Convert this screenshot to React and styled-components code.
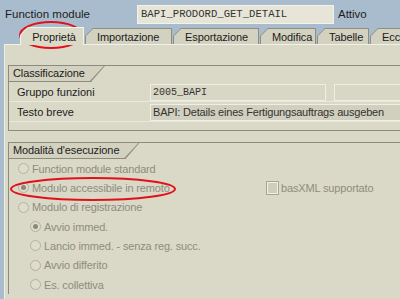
import React from 'react'
import styled, {createGlobalStyle} from 'styled-components'

const Global = createGlobalStyle`
  body {
    margin: 0;
    background: #a9bccd;
    font-family: "Liberation Sans", Arial, sans-serif;
    font-size: 11px;
  }
`

const tabs = [
  {label: 'Proprietà', width: 64, active: true},
  {label: 'Importazione', width: 87},
  {label: 'Esportazione', width: 86},
  {label: 'Modifica', width: 56},
  {label: 'Tabelle', width: 52},
  {label: 'Eccezioni', width: 60},
]

const modes = [
  {label: 'Function module standard'},
  {label: 'Modulo accessibile in remoto', checked: true, extra: 'basXML supportato'},
  {label: 'Modulo di registrazione'},
  {label: 'Avvio immed.', checked: true, sub: true},
  {label: 'Lancio immed. - senza reg. succ.', sub: true},
  {label: 'Avvio differito', sub: true},
  {label: 'Es. collettiva', sub: true},
]

export default function App() {
  return (
    <Screen>
      <Global />
      <TopBar>
        <TopLabel>Function module</TopLabel>
        <NameBox>BAPI_PRODORD_GET_DETAIL</NameBox>
        <Status>Attivo</Status>
      </TopBar>
      <TabStrip>
        {tabs.map(tab => (
          <Tab key={tab.label} width={tab.width} active={tab.active}>
            <TabFace active={tab.active}>{tab.label}</TabFace>
          </Tab>
        ))}
      </TabStrip>
      <Panel>
        <Group>
          <GroupHead>
            <GroupTitle>Classificazione</GroupTitle>
          </GroupHead>
          <FieldRow>
            <FieldLabel>Gruppo funzioni</FieldLabel>
            <Field mono width={172}>2005_BAPI</Field>
            <Field width={80} />
          </FieldRow>
          <FieldRow>
            <FieldLabel>Testo breve</FieldLabel>
            <Field grow dark>BAPI: Details eines Fertigungsauftrags ausgeben</Field>
          </FieldRow>
          <GroupFoot />
        </Group>
        <Group>
          <GroupHead>
            <GroupTitle>Modalità d'esecuzione</GroupTitle>
          </GroupHead>
          <Options>
            {modes.map(mode => (
              <Option key={mode.label} sub={mode.sub}>
                <OptionMain sub={mode.sub}>
                  <Radio checked={mode.checked} />
                  {mode.label}
                </OptionMain>
                {mode.extra && (
                  <CheckWrap>
                    <CheckBox />
                    {mode.extra}
                  </CheckWrap>
                )}
              </Option>
            ))}
          </Options>
        </Group>
      </Panel>
      <Marks width="400" height="299">
        <ellipse cx="51" cy="35" rx="31" ry="13" />
        <ellipse cx="93" cy="189" rx="82" ry="11" />
      </Marks>
    </Screen>
  )
}

const Screen = styled.div`
  position: relative;
  width: 400px;
  height: 299px;
  overflow: hidden;
  display: flex;
  flex-direction: column;
  background: #a9bccd;
`

const TopBar = styled.div`
  flex: none;
  height: 28px;
  display: flex;
  align-items: center;
  padding: 0 0 0 5px;
  color: #1c1c1c;
  font-size: 11.5px;
`

const TopLabel = styled.div`
  width: 132px;
`

const NameBox = styled.div`
  width: 192px;
  height: 17px;
  padding-left: 3px;
  background: #e7e5d7;
  border: 1px solid #f3f2ea;
  font-family: "Liberation Mono", "Courier New", monospace;
  font-size: 10.6px;
  line-height: 17px;
  color: #333;
`

const Status = styled.div`
  margin-left: 4px;
`

const TabStrip = styled.div`
  flex: none;
  height: 16px;
  display: flex;
  align-items: flex-end;
  gap: 1px;
  padding-left: 20px;
`

const Tab = styled.div`
  flex: none;
  width: ${p => p.width}px;
  height: ${p => (p.active ? 18 : 16)}px;
  margin-bottom: ${p => (p.active ? -1 : 0)}px;
  background: ${p => (p.active ? '#f4f3ea' : '#8f8e80')};
  clip-path: polygon(8px 0, 100% 0, 100% 100%, 0 100%, 0 8px);
  position: relative;
  z-index: ${p => (p.active ? 2 : 1)};
`

const TabFace = styled.div`
  position: absolute;
  left: 1px;
  top: 1px;
  right: 1px;
  bottom: 0;
  background: ${p => (p.active ? '#dbd9c7' : '#d3d1bf')};
  clip-path: polygon(7px 0, 100% 0, 100% 100%, 0 100%, 0 7px);
  display: flex;
  align-items: center;
  justify-content: ${p => (p.active ? 'center' : 'flex-start')};
  padding-left: ${p => (p.active ? 4 : 11)}px;
  font-size: 11px;
  letter-spacing: -0.1px;
  color: #1c1c1c;
  white-space: nowrap;
  overflow: hidden;
`

const Panel = styled.div`
  flex: 1;
  min-height: 0;
  overflow: hidden;
  margin-left: 4px;
  background: #dad8c6;
  border-top: 1px solid #f2f1e8;
  border-left: 1px solid #efeee4;
  padding: 20px 0 0 3px;
  display: flex;
  flex-direction: column;
  gap: 11px;
`

const Group = styled.div`
  flex: none;
  border-top: 1px solid #8c8b7d;
  border-left: 1px solid #8c8b7d;
  display: flex;
  flex-direction: column;
`

const GroupHead = styled.div`
  height: 15px;
  display: flex;
  border-bottom: 1px solid #8c8b7d;
  width: max-content;
  background: #8c8b7d;
  clip-path: polygon(0 0, 100% 0, calc(100% - 14px) 100%, 0 100%);
`

const GroupTitle = styled.div`
  background: #d3d1bf;
  padding: 0 20px 0 4px;
  line-height: 15px;
  font-size: 11px;
  letter-spacing: -0.1px;
  color: #1c1c1c;
  clip-path: polygon(0 0, calc(100% - 1px) 0, calc(100% - 15px) 100%, 0 100%);
`

const FieldRow = styled.div`
  box-sizing: border-box;
  height: 20px;
  display: flex;
  align-items: center;
  gap: 8px;
  padding: 1px 0 0 8px;
  border-bottom: 1px solid #e9e8dc;
  overflow: hidden;
`

const FieldLabel = styled.div`
  flex: none;
  width: 125px;
  font-size: 11px;
  color: #1c1c1c;
`

const Field = styled.div`
  flex: ${p => (p.grow ? 1 : 'none')};
  width: ${p => (p.width ? `${p.width}px` : 'auto')};
  height: 15px;
  padding-left: 2px;
  background: ${p => (p.dark ? '#d1cfbd' : '#d8d6c4')};
  border: 1px solid #efeee4;
  border-right: ${p => (p.grow ? 'none' : '1px solid #efeee4')};
  font-family: ${p => (p.mono ? '"Liberation Mono", "Courier New", monospace' : '"Liberation Sans", Arial, sans-serif')};
  font-size: ${p => (p.mono ? '10px' : '11px')};
  letter-spacing: ${p => (p.mono ? 0 : -0.2)}px;
  line-height: 15px;
  color: #333;
  white-space: nowrap;
  overflow: hidden;
`

const GroupFoot = styled.div`
  height: 8px;
  border-bottom: 1px solid #8c8b7d;
`

const Options = styled.div`
  display: flex;
  flex-direction: column;
`

const Option = styled.div`
  flex: none;
  height: 19.33px;
  display: flex;
  align-items: center;
  padding-left: ${p => (p.sub ? 21 : 9)}px;
`

const OptionMain = styled.div`
  width: ${p => (p.sub ? 237 : 249)}px;
  display: flex;
  align-items: center;
  gap: 3px;
  font-size: 11px;
  letter-spacing: -0.15px;
  color: #8e8d7e;
  white-space: nowrap;
`

const Radio = styled.span`
  flex: none;
  width: 9px;
  height: 9px;
  border-radius: 50%;
  border: 1px solid #b2b1a3;
  background: #dedccc;
  display: inline-flex;
  align-items: center;
  justify-content: center;

  &::after {
    content: '';
    width: 5px;
    height: 5px;
    border-radius: 50%;
    background: ${p => (p.checked ? '#8a897b' : 'transparent')};
  }
`

const CheckWrap = styled.div`
  display: flex;
  align-items: center;
  gap: 3px;
  font-size: 11px;
  letter-spacing: -0.15px;
  color: #8e8d7e;
  white-space: nowrap;
`

const CheckBox = styled.span`
  width: 9px;
  height: 10px;
  background: #cfcdbc;
  border: 1px solid #f0efe6;
  outline: 1px solid #a6a597;
`

const Marks = styled.svg`
  position: absolute;
  left: 0;
  top: 0;
  pointer-events: none;

  ellipse {
    fill: none;
    stroke: #e3101a;
    stroke-width: 2;
  }
`
